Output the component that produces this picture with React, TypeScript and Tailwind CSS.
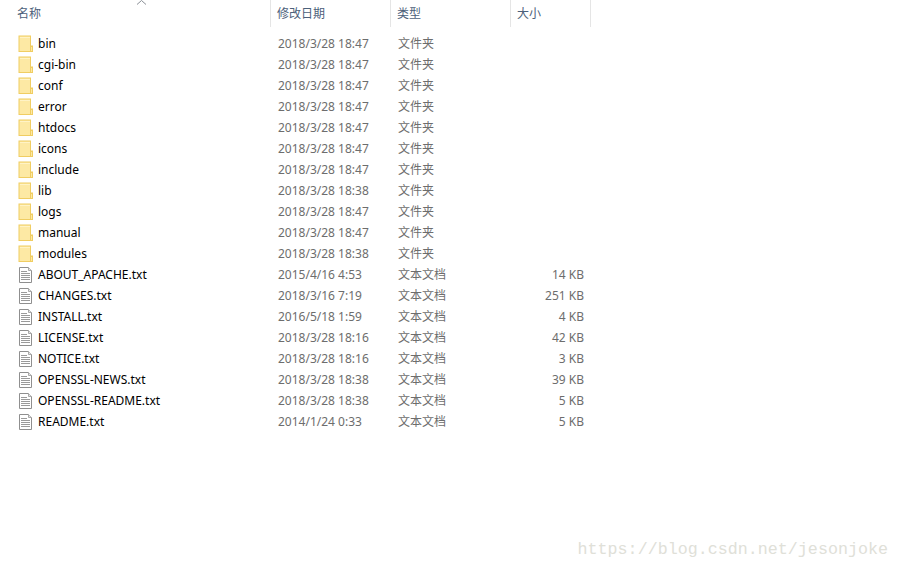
const rows: [string, string, string, string, boolean][] = [
  ["bin", "2018/3/28 18:47", "文件夹", "", true],
  ["cgi-bin", "2018/3/28 18:47", "文件夹", "", true],
  ["conf", "2018/3/28 18:47", "文件夹", "", true],
  ["error", "2018/3/28 18:47", "文件夹", "", true],
  ["htdocs", "2018/3/28 18:47", "文件夹", "", true],
  ["icons", "2018/3/28 18:47", "文件夹", "", true],
  ["include", "2018/3/28 18:47", "文件夹", "", true],
  ["lib", "2018/3/28 18:38", "文件夹", "", true],
  ["logs", "2018/3/28 18:47", "文件夹", "", true],
  ["manual", "2018/3/28 18:47", "文件夹", "", true],
  ["modules", "2018/3/28 18:38", "文件夹", "", true],
  ["ABOUT_APACHE.txt", "2015/4/16 4:53", "文本文档", "14 KB", false],
  ["CHANGES.txt", "2018/3/16 7:19", "文本文档", "251 KB", false],
  ["INSTALL.txt", "2016/5/18 1:59", "文本文档", "4 KB", false],
  ["LICENSE.txt", "2018/3/28 18:16", "文本文档", "42 KB", false],
  ["NOTICE.txt", "2018/3/28 18:16", "文本文档", "3 KB", false],
  ["OPENSSL-NEWS.txt", "2018/3/28 18:38", "文本文档", "39 KB", false],
  ["OPENSSL-README.txt", "2018/3/28 18:38", "文本文档", "5 KB", false],
  ["README.txt", "2014/1/24 0:33", "文本文档", "5 KB", false],
];

function FolderIcon() {
  return (
    <svg width="16" height="18" viewBox="0 0 16 18" className="shrink-0">
      <rect x="1" y="1" width="11.5" height="15.5" fill="#fde9a4" stroke="#f0cd62" />
      <rect x="12.5" y="11" width="2" height="5.5" fill="#fde9a4" stroke="#f0cd62" />
      <rect x="2" y="2" width="10" height="1" fill="#fff3c6" />
    </svg>
  );
}

function FileIcon() {
  return (
    <svg width="16" height="18" viewBox="0 0 16 18" className="shrink-0">
      <path d="M1.5 1.5H10.5L13.5 4.5V16.5H1.5Z" fill="#ffffff" stroke="#8f8f8f" />
      <path d="M10.5 1.5V4.5H13.5" fill="#e6e6e6" stroke="#a8a8a8" />
      <path d="M3 5.5H9M3 7.5H12M3 9.5H12M3 11.5H12M3 13.5H12" stroke="#9a9a9a" fill="none" />
    </svg>
  );
}

const headers = [
  { label: "修改日期", cls: "w-[120px]" },
  { label: "类型", cls: "w-[120px]" },
  { label: "大小", cls: "w-[80px]" },
];

export default function App() {
  return (
    <div className="relative w-[900px] h-[570px] overflow-hidden bg-white font-['Noto_Sans','Noto_Sans_CJK_SC',sans-serif] text-[12px]">
      <div className="flex h-[27px] text-[#4c607a]">
        <div className="relative w-[271px] pl-[17px] leading-[27px] border-r border-[#e5e5e5]">
          名称
          <svg width="11" height="6" viewBox="0 0 11 6" className="absolute left-[136px] top-0">
            <path d="M1 4.5L5.5 0.5L10 4.5" fill="none" stroke="#8a8f96" />
          </svg>
        </div>
        {headers.map((h) => (
          <div key={h.label} className={`${h.cls} pl-[6px] leading-[27px] border-r border-[#e5e5e5]`}>
            {h.label}
          </div>
        ))}
      </div>
      <div className="pt-[6px]">
        {rows.map(([name, date, type, size, isDir]) => (
          <div key={name} className="flex h-[21px] items-center leading-[21px]">
            <div className="flex w-[272px] items-center pl-[18px] text-black">
              {isDir ? <FolderIcon /> : <FileIcon />}
              <span className="ml-[4px]">{name}</span>
            </div>
            <div className="w-[120px] pl-[6px] text-[#6d6d6d]">{date}</div>
            <div className="w-[120px] pl-[6px] text-[#6d6d6d]">{type}</div>
            <div className="w-[72px] text-right text-[#6d6d6d]">{size}</div>
          </div>
        ))}
      </div>
      <div className="absolute right-[12px] bottom-[10px] font-['Liberation_Mono',monospace] text-[16.7px] leading-[20px] text-[#e0e0d8]">
        https://blog.csdn.net/jesonjoke
      </div>
    </div>
  );
}
